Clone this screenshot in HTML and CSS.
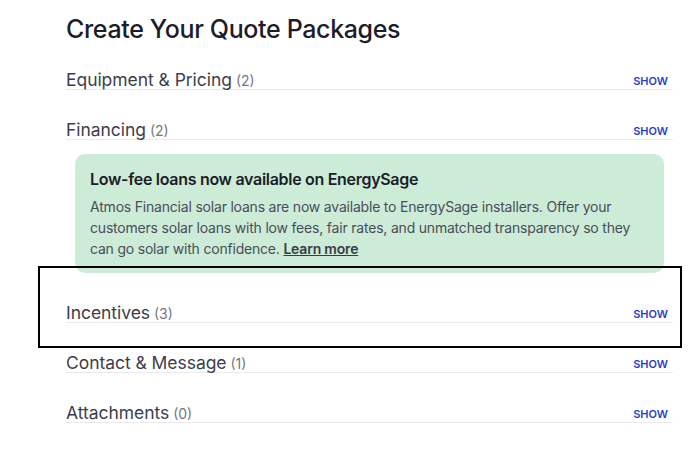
FILE: index.html
```html
<!DOCTYPE html>
<html lang="en">
<head>
  <meta charset="UTF-8" />
  <title>Create Your Quote Packages</title>
  <link rel="stylesheet" href="styles.css">
</head>
<body>

<div class="page">
  <h1 class="title">Create Your Quote Packages</h1>

  <div class="row">
    <span class="row-name">Equipment &amp; Pricing</span>
    <span class="count">(2)</span>
    <a class="show" href="#">SHOW</a>
  </div>

  <div class="row">
    <span class="row-name">Financing</span>
    <span class="count">(2)</span>
    <a class="show" href="#">SHOW</a>
  </div>

  <div class="promo">
    <h2>Low-fee loans now available on EnergySage</h2>
    <p>Atmos Financial solar loans are now available to EnergySage installers. Offer your customers solar loans with low fees, fair rates, and unmatched transparency so they can go solar with confidence. <a href="#">Learn more</a></p>
  </div>

  <div class="row">
    <span class="row-name">Incentives</span>
    <span class="count">(3)</span>
    <a class="show" href="#">SHOW</a>
  </div>

  <div class="row">
    <span class="row-name">Contact &amp; Message</span>
    <span class="count">(1)</span>
    <a class="show" href="#">SHOW</a>
  </div>

  <div class="row">
    <span class="row-name">Attachments</span>
    <span class="count">(0)</span>
    <a class="show" href="#">SHOW</a>
  </div>
</div>

<div class="highlight"></div>

</body>
</html>
```

FILE: styles.css
```css
body {
  margin: 0;
  background-color: #fff;
  font-family: 'Inter', 'Noto Sans', sans-serif;
  color: #1e1f2b;
}
.page {
  width: 607px;
  margin-left: 66px;
  padding-top: 13px;
}
.title {
  margin: 0;
  font-size: 25px;
  font-weight: 500;
  line-height: 32px;
  letter-spacing: -0.35px;
  color: #1c1d29;
}
.row {
  display: flex;
  align-items: center;
  height: 20px;
  margin-top: 29px;
  border-bottom: 1px solid #e9e9ef;
}
.page .title + .row {
  margin-top: 24px;
}
.row-name {
  font-size: 17.5px;
  color: #3d3e4c;
  letter-spacing: -0.05px;
}
.count {
  font-size: 14px;
  color: #76777f;
  margin-left: 4px;
  padding-top: 2px;
}
.show {
  margin-left: auto;
  margin-right: 5px;
  padding-top: 4px;
  font-size: 11px;
  font-weight: 600;
  color: #2c3fc2;
  text-decoration: none;
}
.promo {
  margin: 14px 9px 0;
  padding: 15px 15px 14px;
  background-color: #ccecd8;
  border-radius: 10px;
}
.promo h2 {
  margin: 0 0 7px;
  font-size: 16px;
  font-weight: 600;
  line-height: 20px;
  letter-spacing: -0.3px;
  color: #1c1d27;
}
.promo p {
  margin: 0;
  font-size: 14px;
  line-height: 21px;
  letter-spacing: -0.2px;
  color: #4b4c58;
}
.promo a {
  color: #3a3b45;
  font-weight: 600;
}
.highlight {
  position: absolute;
  left: 38px;
  top: 266px;
  width: 640px;
  height: 78px;
  border: 2px solid #000;
}
```
